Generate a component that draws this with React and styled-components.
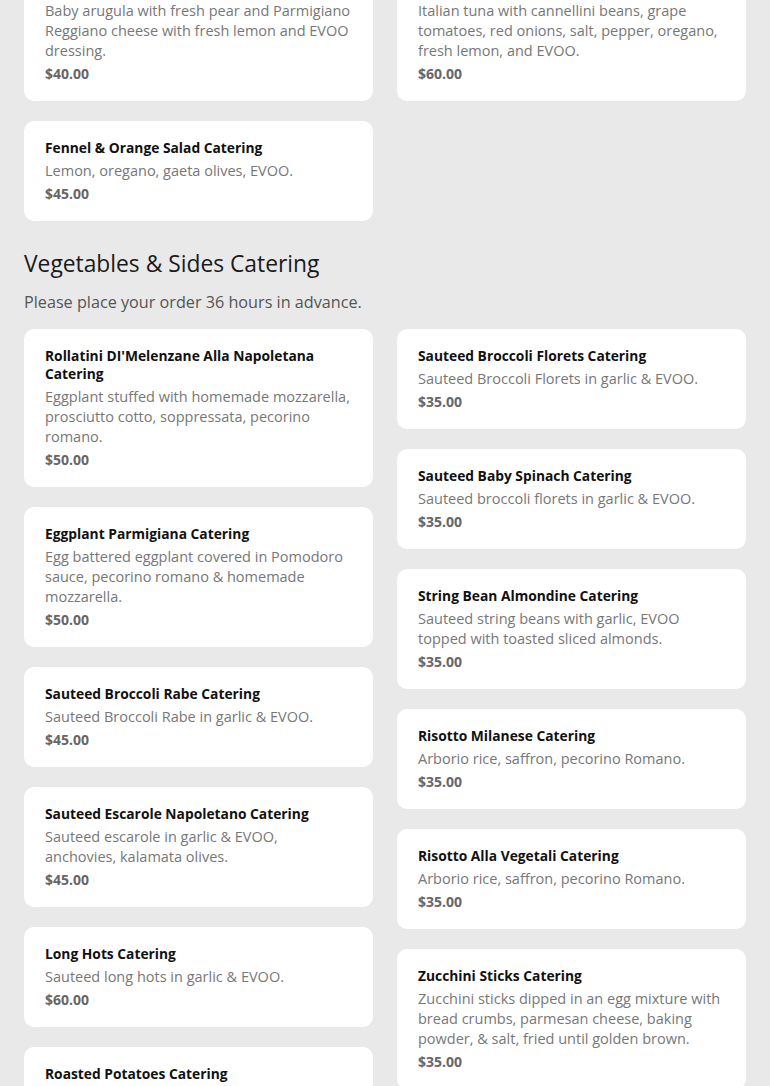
import React from "react"
import styled, { createGlobalStyle } from "styled-components"

const GlobalStyle = createGlobalStyle`
  html, body {
    margin: 0;
    padding: 0;
    background: #e9e9e9;
    font-family: "Open Sans", "Liberation Sans", sans-serif;
    overflow: hidden;
  }
`

const Page = styled.main`
  padding: 0 24px 40px;
`

const Section = styled.section`
  margin-top: ${props => props.offset || 0}px;
`

const Heading = styled.h2`
  margin: 27px 0 0;
  font-size: 22.8px;
  line-height: 32px;
  font-weight: 400;
  color: #1a1a1a;
`

const Note = styled.p`
  margin: 10px 0 15px;
  font-size: 16.2px;
  line-height: 24px;
  color: #555;
`

const Columns = styled.div`
  display: grid;
  grid-template-columns: 1fr 1fr;
  column-gap: 24px;
  align-items: start;
`

const Column = styled.div`
  display: flex;
  flex-direction: column;
  gap: 20px;
`

const Card = styled.article`
  background: #fff;
  border-radius: 10px;
  padding: 18px 22px 17px 21px;
`

const Title = styled.h3`
  margin: 0;
  font-size: 13.8px;
  line-height: 18px;
  font-weight: 700;
  color: #111;
`

const Description = styled.p`
  margin: 4px 0 0;
  font-size: 14.5px;
  line-height: 20px;
  color: #777;
`

const Price = styled.div`
  margin-top: 3px;
  font-size: 14px;
  line-height: 20px;
  font-weight: 700;
  color: #666;
`

const salads = [
  [
    {
      title: "Arugula & Pear Salad Catering",
      text: "Baby arugula with fresh pear and Parmigiano Reggiano cheese with fresh lemon and EVOO dressing.",
      price: "$40.00",
    },
    {
      title: "Fennel & Orange Salad Catering",
      text: "Lemon, oregano, gaeta olives, EVOO.",
      price: "$45.00",
    },
  ],
  [
    {
      title: "Tuna Salad Catering",
      text: "Italian tuna with cannellini beans, grape tomatoes, red onions, salt, pepper, oregano, fresh lemon, and EVOO.",
      price: "$60.00",
    },
  ],
]

const sides = [
  [
    {
      title: "Rollatini DI'Melenzane Alla Napoletana Catering",
      text: "Eggplant stuffed with homemade mozzarella, prosciutto cotto, soppressata, pecorino romano.",
      price: "$50.00",
    },
    {
      title: "Eggplant Parmigiana Catering",
      text: "Egg battered eggplant covered in Pomodoro sauce, pecorino romano & homemade mozzarella.",
      price: "$50.00",
    },
    {
      title: "Sauteed Broccoli Rabe Catering",
      text: "Sauteed Broccoli Rabe in garlic & EVOO.",
      price: "$45.00",
    },
    {
      title: "Sauteed Escarole Napoletano Catering",
      text: "Sauteed escarole in garlic & EVOO, anchovies, kalamata olives.",
      price: "$45.00",
    },
    {
      title: "Long Hots Catering",
      text: "Sauteed long hots in garlic & EVOO.",
      price: "$60.00",
    },
    {
      title: "Roasted Potatoes Catering",
      text: "Roasted potatoes with rosemary, garlic & EVOO.",
      price: "$40.00",
    },
  ],
  [
    {
      title: "Sauteed Broccoli Florets Catering",
      text: "Sauteed Broccoli Florets in garlic & EVOO.",
      price: "$35.00",
    },
    {
      title: "Sauteed Baby Spinach Catering",
      text: "Sauteed broccoli florets in garlic & EVOO.",
      price: "$35.00",
    },
    {
      title: "String Bean Almondine Catering",
      text: "Sauteed string beans with garlic, EVOO topped with toasted sliced almonds.",
      price: "$35.00",
    },
    {
      title: "Risotto Milanese Catering",
      text: "Arborio rice, saffron, pecorino Romano.",
      price: "$35.00",
    },
    {
      title: "Risotto Alla Vegetali Catering",
      text: "Arborio rice, saffron, pecorino Romano.",
      price: "$35.00",
    },
    {
      title: "Zucchini Sticks Catering",
      text: "Zucchini sticks dipped in an egg mixture with bread crumbs, parmesan cheese, baking powder, & salt, fried until golden brown.",
      price: "$35.00",
    },
  ],
]

const MenuCard = ({ item }) => (
  <Card>
    <Title>{item.title}</Title>
    <Description>{item.text}</Description>
    <Price>{item.price}</Price>
  </Card>
)

const MenuColumns = ({ columns }) => (
  <Columns>
    {columns.map((column, i) => (
      <Column key={i}>
        {column.map(item => (
          <MenuCard key={item.title} item={item} />
        ))}
      </Column>
    ))}
  </Columns>
)

const App = () => (
  <>
    <GlobalStyle />
    <Page>
      <Section offset={-39}>
        <MenuColumns columns={salads} />
      </Section>
      <Section>
        <Heading>Vegetables & Sides Catering</Heading>
        <Note>Please place your order 36 hours in advance.</Note>
        <MenuColumns columns={sides} />
      </Section>
    </Page>
  </>
)

export default App
